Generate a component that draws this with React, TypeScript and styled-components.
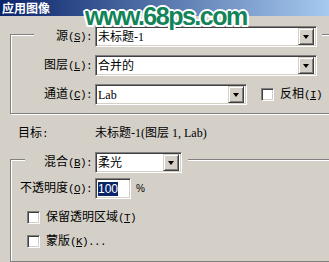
import React from "react";
import styled, { createGlobalStyle } from "styled-components";

const GlobalStyle = createGlobalStyle`
  html, body {
    margin: 0;
    padding: 0;
    background: #d4d0c8;
    overflow: hidden;
  }
`;

const Dialog = styled.div`
  position: relative;
  width: 329px;
  height: 262px;
  overflow: hidden;
  background: #d4d0c8;
  font-family: "Liberation Serif", "Noto Sans CJK SC", serif;
  font-size: 12px;
  line-height: 16px;
  color: #000;
`;

const TitleBar = styled.div`
  height: 16px;
  padding-left: 2px;
  background: linear-gradient(to right, #0a246a, #a6caf0);
  color: #fff;
  font-family: "Noto Sans CJK SC", sans-serif;
  font-weight: bold;
  font-size: 12px;
  line-height: 16px;
`;

const Watermark = styled.div`
  position: absolute;
  left: 85px;
  top: 1px;
  font-family: "Liberation Sans", Arial, sans-serif;
  font-weight: bold;
  font-size: 25px;
  line-height: 30px;
  letter-spacing: -1.5px;
  color: #11845a;
  text-shadow: 2px 0 #fff, -2px 0 #fff, 0 2px #fff, 0 -2px #fff,
    1.5px 1.5px #fff, -1.5px 1.5px #fff, 1.5px -1.5px #fff, -1.5px -1.5px #fff;
`;

const Body = styled.div`
  padding: 18px 0 0 10px;
`;

const Group = styled.div<{ $pb: number }>`
  margin-right: -40px;
  border: 1px solid #808080;
  box-shadow: inset 1px 1px 0 #fff, 1px 1px 0 #fff;
  padding-bottom: ${({ $pb }) => $pb}px;
`;

const Legend = styled.div<{ $indent: number; $top: number; $pr: number }>`
  display: flex;
  align-items: center;
  width: fit-content;
  margin: ${({ $top }) => $top}px 0 0 ${({ $indent }) => $indent}px;
  padding-right: ${({ $pr }) => $pr}px;
  background: #d4d0c8;
`;

const Row = styled.div<{ $indent: number; $top: number }>`
  display: flex;
  align-items: center;
  margin: ${({ $top }) => $top}px 0 0 ${({ $indent }) => $indent}px;
`;

const Label = styled.label<{ $w: number }>`
  width: ${({ $w }) => $w}px;
  margin-right: 3px;
  text-align: right;
  white-space: nowrap;
`;

const PlainLabel = styled.span<{ $w: number }>`
  width: ${({ $w }) => $w}px;
  white-space: nowrap;
`;

/* half-width ascii, like the old 12px system font */
const Half = styled.span`
  font-family: "Liberation Mono", "DejaVu Sans Mono", monospace;
  font-size: 11px;
  letter-spacing: -0.6px;
`;

const Key = styled.span`
  text-decoration: underline;
`;

const Select = styled.div<{ $w: number }>`
  width: ${({ $w }) => $w}px;
  height: 21px;
  box-sizing: border-box;
  display: flex;
  align-items: center;
  background: #fff;
  border: 1px solid;
  border-color: #808080 #fff #fff #808080;
  box-shadow: inset 1px 1px 0 #404040, inset -1px -1px 0 #d4d0c8;
  padding: 0 2px 0 2px;
`;

const SelectText = styled.span`
  flex: 1;
  white-space: nowrap;
  overflow: hidden;
`;

const DropButton = styled.div`
  width: 16px;
  height: 17px;
  box-sizing: border-box;
  display: flex;
  align-items: center;
  justify-content: center;
  background: #d4d0c8;
  border: 1px solid;
  border-color: #d4d0c8 #404040 #404040 #d4d0c8;
  box-shadow: inset 1px 1px 0 #fff, inset -1px -1px 0 #808080;
`;

const Arrow = styled.span`
  width: 0;
  height: 0;
  border-left: 3.5px solid transparent;
  border-right: 3.5px solid transparent;
  border-top: 4px solid #000;
`;

const Check = styled.span<{ $left?: number }>`
  width: 13px;
  height: 13px;
  box-sizing: border-box;
  flex-shrink: 0;
  margin-left: ${({ $left }) => $left ?? 0}px;
  background: #fff;
  border: 1px solid;
  border-color: #808080 #fff #fff #808080;
  box-shadow: inset 1px 1px 0 #404040, inset -1px -1px 0 #d4d0c8;
`;

const CheckText = styled.span`
  margin-left: 6px;
  white-space: nowrap;
`;

const NumberField = styled.div`
  width: 36px;
  height: 21px;
  box-sizing: border-box;
  display: flex;
  align-items: center;
  background: #fff;
  border: 1px solid;
  border-color: #808080 #fff #fff #808080;
  box-shadow: inset 1px 1px 0 #404040, inset -1px -1px 0 #d4d0c8;
  padding-left: 2px;
`;

const Selected = styled.span`
  background: #0a246a;
  color: #fff;
  font-family: "Liberation Sans", Arial, sans-serif;
  font-size: 12px;
  line-height: 14px;
`;

const Unit = styled.span`
  margin-left: 5px;
  font-family: "Liberation Sans", Arial, sans-serif;
  font-size: 10px;
`;

const TargetRow = styled.div`
  display: flex;
  margin-top: 11px;
  padding-left: 8px;
  height: 16px;
`;

const Dropdown = ({ w, value }: { w: number; value: string }) => (
  <Select $w={w}>
    <SelectText>{value}</SelectText>
    <DropButton>
      <Arrow />
    </DropButton>
  </Select>
);

const Mnemonic = ({ k, tail = "" }: { k: string; tail?: string }) => (
  <Half>
    (<Key>{k}</Key>){tail}
  </Half>
);

export default function App() {
  return (
    <Dialog>
      <GlobalStyle />
      <TitleBar>应用图像</TitleBar>
      <Watermark>www.68ps.com</Watermark>
      <Body>
        <Group $pb={8}>
          <Legend $indent={23} $top={-9} $pr={5}>
            <Label $w={58}>
              源<Mnemonic k="S" tail=":" />
            </Label>
            <Dropdown w={222} value="未标题-1" />
          </Legend>
          <Row $indent={23} $top={8}>
            <Label $w={58}>
              图层<Mnemonic k="L" tail=":" />
            </Label>
            <Dropdown w={222} value="合并的" />
          </Row>
          <Row $indent={23} $top={8}>
            <Label $w={58}>
              通道<Mnemonic k="C" tail=":" />
            </Label>
            <Dropdown w={152} value="Lab" />
            <Check $left={14} />
            <CheckText>
              反相<Mnemonic k="I" />
            </CheckText>
          </Row>
        </Group>
        <TargetRow>
          <PlainLabel $w={77}>
            目标<Half>:</Half>
          </PlainLabel>
          <span>未标题-1(图层 1, Lab)</span>
        </TargetRow>
        <Group $pb={11} style={{ marginTop: 18 }}>
          <Legend $indent={14} $top={-8} $pr={6}>
            <Label $w={67}>
              混合<Mnemonic k="B" tail=":" />
            </Label>
            <Dropdown w={87} value="柔光" />
          </Legend>
          <Row $indent={7} $top={5}>
            <Label $w={74}>
              不透明度<Mnemonic k="O" tail=":" />
            </Label>
            <NumberField>
              <Selected>100</Selected>
            </NumberField>
            <Unit>%</Unit>
          </Row>
          <Row $indent={16} $top={10}>
            <Check />
            <CheckText>
              保留透明区域<Mnemonic k="T" />
            </CheckText>
          </Row>
          <Row $indent={16} $top={7}>
            <Check />
            <CheckText>
              蒙版<Mnemonic k="K" tail="..." />
            </CheckText>
          </Row>
        </Group>
      </Body>
    </Dialog>
  );
}
